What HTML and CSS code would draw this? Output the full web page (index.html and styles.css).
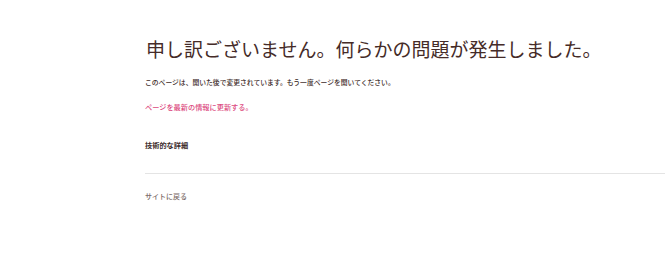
FILE: index.html
```html
<!DOCTYPE html>
<html lang="ja">

<head>
  <meta charset="UTF-8">
  <meta name="viewport" content="width=device-width, initial-scale=1.0">
  <title>エラー</title>
  <link rel="stylesheet" href="styles.css">
</head>

<body>
  <div class="error-page">
    <h1 class="error-title">申し訳ございません。何らかの問題が発生しました。</h1>
    <p class="error-message">このページは、開いた後で変更されています。もう一度ページを開いてください。</p>
    <a class="refresh-link" href="#">ページを最新の情報に更新する。</a>
    <div class="details">
      <span class="details-toggle">技術的な詳細</span>
    </div>
    <a class="back-link" href="#">サイトに戻る</a>
  </div>
</body>

</html>
```

FILE: styles.css
```css
html,
body {
  margin: 0;
  height: 100%;
  background-color: #fff;
  font-family: "Noto Sans CJK JP", "Noto Sans", sans-serif;
  color: #3e2c2a;
}

.error-page {
  padding: 36px 1px 0 145px;
}

.error-title {
  margin: 0 0 0 1px;
  font-size: 19px;
  font-weight: normal;
  line-height: 26px;
  color: #452b28;
}

.error-message {
  margin: 14px 0 0;
  font-size: 6.8px;
  font-weight: 500;
  line-height: 12px;
}

.refresh-link {
  display: block;
  margin-top: 13px;
  font-size: 7.2px;
  font-weight: 500;
  line-height: 12px;
  color: #dc4a80;
  text-decoration: none;
}

.details {
  padding: 16px 0 20px;
  border-bottom: 1px solid #e4e4e4;
}

.details-toggle {
  font-size: 7.2px;
  line-height: 12px;
  font-weight: bold;
  color: #3a2a2a;
}

.back-link {
  display: block;
  margin-top: 16px;
  font-size: 7px;
  font-weight: 500;
  line-height: 12px;
  color: #7b6b68;
  text-decoration: none;
}
```
